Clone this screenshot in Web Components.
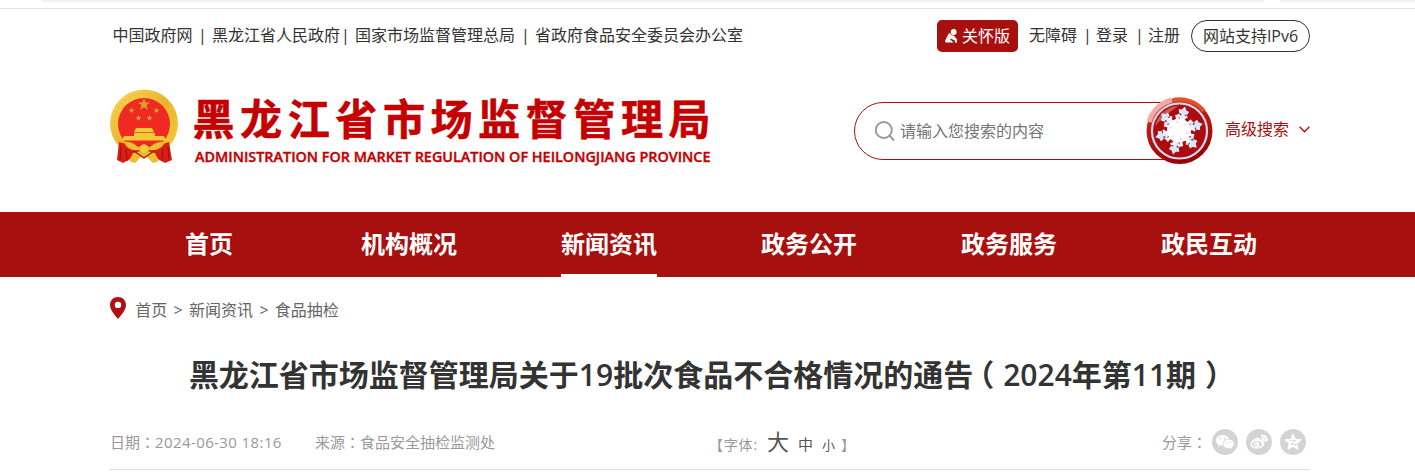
<!DOCTYPE html>
<html lang="zh-CN">
<head>
<meta charset="utf-8">
<title>黑龙江省市场监督管理局</title>
<style>
  body {
    background: #ffffff;
    color: #333333;
    font-family: 'Open Sans', 'Noto Sans CJK SC', sans-serif;
    font-size: 16px;
    font-weight: 400;
    margin: 0;
    overflow: hidden;
  }

  /* Full width marks sit in the middle of their cell */
  .colon {
    font-family: 'Noto Sans CJK TC', sans-serif;
  }

  .open,
  .close {
    font-feature-settings: 'halt';
  }

  .open {
    margin: 0 9px 0 6px;
  }

  .close {
    margin: 0 6px 0 9px;
  }
</style>
</head>
<body>
<hl-topbar>
  <hl-link slot="left" style="--before: 2.5px">中国政府网</hl-link>
  <hl-link slot="left" divided style="--left: 5.5px; --right: 6px">黑龙江省人民政府</hl-link>
  <hl-link slot="left" divided style="--left: 1px; --right: 6px">国家市场监督管理总局</hl-link>
  <hl-link slot="left" divided style="--left: 6px; --right: 6px">省政府食品安全委员会办公室</hl-link>
  <hl-care slot="right">关怀版</hl-care>
  <hl-link slot="right" style="--before: 11px">无障碍</hl-link>
  <hl-link slot="right" divided style="--left: 6px; --right: 5px">登录</hl-link>
  <hl-link slot="right" divided style="--left: 7px; --right: 5px">注册</hl-link>
  <hl-pill slot="right">网站支持IPv6</hl-pill>
</hl-topbar>
<hl-header>
  <hl-logo></hl-logo>
  <hl-search placeholder="请输入您搜索的内容">高级搜索</hl-search>
</hl-header>
<hl-nav>
  <hl-nav-item>首页</hl-nav-item>
  <hl-nav-item>机构概况</hl-nav-item>
  <hl-nav-item active>新闻资讯</hl-nav-item>
  <hl-nav-item>政务公开</hl-nav-item>
  <hl-nav-item>政务服务</hl-nav-item>
  <hl-nav-item>政民互动</hl-nav-item>
</hl-nav>
<hl-crumbs>
  <span>首页</span>
  <span>&gt;</span>
  <span>新闻资讯</span>
  <span>&gt;</span>
  <span>食品抽检</span>
</hl-crumbs>
<hl-article>
  <span slot="title">黑龙江省市场监督管理局关于19批次食品不合格情况的通告<span class="open">（</span>2024年第11期<span class="close">）</span></span>
  <span slot="date">日期<span class="colon" lang="zh-TW">：</span><span style="letter-spacing: .4px">2024-06-30 18:16</span></span>
  <span slot="source">来源<span class="colon" lang="zh-TW">：</span>食品安全抽检监测处</span>
  <hl-share slot="share">分享<span class="colon" lang="zh-TW">：</span></hl-share>
</hl-article>

<script>
  // Shared base
  // Clones the markup of each element into its root
  class HLElement extends HTMLElement {
    constructor() {
      super();

      const template = document.createElement( 'template' );
      template.innerHTML = this.constructor.markup;

      this.attachShadow( {mode: 'open'} );
      this.shadowRoot.appendChild( template.content.cloneNode( true ) );
    }
  }

  class HLTopbar extends HLElement {
    static markup = /* template */ `
      <style>
        :host {
          display: block;
          height: 64px;
        }

        .tabs {
          box-sizing: border-box;
          display: flex;
          gap: 16px;
          height: 9px;
          border-bottom: 1px solid #e6e6e6;
          padding-left: 42px;
        }

        .tabs i {
          background: #f1f1f1;
          height: 2px;
          width: 1222px;
        }

        .tabs i:last-child {
          flex-grow: 1;
          width: auto;
        }

        .row {
          display: flex;
          height: 32px;
          justify-content: space-between;
          margin: 11px 0 0 110px;
          width: 1200px;
        }

        .row div {
          align-items: center;
          display: flex;
        }
      </style>
      <div class="tabs"><i></i><i></i></div>
      <div class="row">
        <div><slot name="left"></slot></div>
        <div><slot name="right"></slot></div>
      </div>
    `;
  }

  class HLLink extends HLElement {
    static markup = /* template */ `
      <style>
        :host {
          display: inline-flex;
          height: 32px;
          line-height: 30px;
          margin-left: var( --before, 0 );
          white-space: nowrap;
        }

        b {
          font-weight: 400;
          margin: 0 var( --right, 6px ) 0 var( --left, 6px );
          text-align: center;
          width: 8px;
        }

        :host( :not( [divided] ) ) b {
          display: none;
        }
      </style>
      <b>|</b><slot></slot>
    `;
  }

  class HLCare extends HLElement {
    static markup = /* template */ `
      <style>
        :host {
          align-items: center;
          background: #a81010;
          border-radius: 5px;
          box-sizing: border-box;
          color: #ffffff;
          display: flex;
          height: 32px;
          line-height: 32px;
          padding-left: 8px;
          width: 81px;
        }

        svg {
          height: 14px;
          margin-right: 4px;
          width: 13px;
        }
      </style>
      <svg viewBox="0 0 13 14" fill="#ffffff">
        <circle cx="8.700" cy="3" r="2.900"></circle>
        <path d="M5 3.800C2.600 5 2 8.500 .2 11.600 0 13 .5 13.600 1.400 13.600H8.600L5.200 10.600 5.700 9.500 9.900 11.600V13.600H12V10.200L8.600 6.600C6.800 6.500 5.400 5.500 5 3.800Z"></path>
      </svg>
      <slot></slot>
    `;
  }

  class HLPill extends HLElement {
    static markup = /* template */ `
      <style>
        :host {
          border: 1px solid #333333;
          border-radius: 16px;
          box-sizing: border-box;
          height: 32px;
          line-height: 30px;
          margin-left: 11px;
          text-align: center;
          white-space: nowrap;
          width: 119px;
        }
      </style>
      <slot></slot>
    `;
  }

  class HLHeader extends HLElement {
    static markup = /* template */ `
      <style>
        :host {
          display: flex;
          height: 148px;
          justify-content: space-between;
          margin-left: 110px;
          width: 1200px;
        }
      </style>
      <slot></slot>
    `;
  }

  class HLLogo extends HLElement {
    static markup = /* template */ `
      <style>
        :host {
          display: block;
          padding-top: 5px;
        }

        svg {
          display: block;
          overflow: visible;
        }

        text {
          fill: #c40000;
          font-weight: 700;
        }

        .name {
          font-family: 'Noto Sans CJK SC', sans-serif;
          font-size: 42px;
          stroke: #c40000;
          stroke-width: .6px;
        }

        .english {
          font-family: 'Open Sans', sans-serif;
          font-size: 15px;
          font-weight: 600;
          stroke: #c40000;
          stroke-width: .4px;
        }
      </style>
      <svg width="630" height="120" viewBox="0 -20 630 120">
        <defs>
          <linearGradient id="gold" x1="0" y1="0" x2="1" y2="1">
            <stop offset="0" stop-color="#fbd95a"></stop>
            <stop offset=".5" stop-color="#eab52d"></stop>
            <stop offset="1" stop-color="#f8cf3e"></stop>
          </linearGradient>
          <path id="star" d="M0-6 1.500-1.900 5.800-1.800 2.300.8 3.600 5 0 2.500-3.600 5-2.300.8-5.800-1.800-1.500-1.900Z"></path>
        </defs>

        <!-- Emblem -->
        <circle cx="34" cy="34.500" r="34" fill="url(#gold)"></circle>
        <circle cx="34" cy="34.500" r="30" fill="none" stroke="#dca92a" stroke-width=".8" stroke-dasharray="2 3"></circle>
        <circle cx="34" cy="35" r="26" fill="#ee2a22"></circle>
        <g fill="#d9a230">
          <use href="#star" transform="translate(34 15.500) scale(1.080)"></use>
          <use href="#star" transform="translate(21.500 21.500) scale(.52)"></use>
          <use href="#star" transform="translate(46.500 21.500) scale(.52)"></use>
          <use href="#star" transform="translate(28.500 29) scale(.52)"></use>
          <use href="#star" transform="translate(39.500 29) scale(.52)"></use>
        </g>
        <path fill="#f7c838" d="M26 39H42L44 43H24ZM24 44H45V47H54L56 51.500H12L14 47H24Z"></path>
        <path stroke="#c88218" stroke-width=".8" d="M24 43.500H44"></path>
        <path fill="#d91e18" d="M9 53 24 57 34 55 46 57 59 53 62 71 55 74 44 68H24L13 74 7 71Z"></path>
        <path fill="#eebd32" d="M14 53C20 52 25 55 28 58L34 55 40 58C43 55 49 52 55 53 53 59 46 62 40 61L34 64 28 61C22 62 16 59 14 53ZM23 64 31 62H37L45 64 49 72 43 74 37 68H31L25 74 19 72Z"></path>
        <circle cx="34" cy="60" r="4.500" fill="#f5cc3d" stroke="#d6a02a" stroke-width=".8"></circle>
        <path fill="none" stroke="#a80f12" stroke-width="1.200" d="M11 57 10 71M16 60 17 72M58 57 59 71M53 60 52 72M24 62 34 69 44 62"></path>

        <text class="name" x="82.500" y="46" textLength="518" lengthAdjust="spacing">黑龙江省市场监督管理局</text>
        <text class="english" x="85" y="72.500" textLength="515.500" lengthAdjust="spacingAndGlyphs">ADMINISTRATION FOR MARKET REGULATION OF HEILONGJIANG PROVINCE</text>
      </svg>
    `;
  }

  class HLSearch extends HLElement {
    static markup = /* template */ `
      <style>
        :host {
          color: #a81010;
          display: flex;
          padding-top: 38px;
          width: 456px;
        }

        .box {
          align-items: center;
          border: 1px solid #a81010;
          border-radius: 29px;
          box-sizing: border-box;
          color: #757575;
          display: flex;
          height: 58px;
          padding-left: 20px;
          width: 354px;
        }

        .box span {
          line-height: 28px;
        }

        .glass {
          margin-right: 4px;
        }

        .snow {
          margin: -5px 0 0 -62px;
        }

        .more {
          align-items: center;
          display: flex;
          height: 54px;
          line-height: 28px;
          margin-left: 12px;
          white-space: nowrap;
        }

        .more svg {
          margin-left: 10px;
        }
      </style>
      <div class="box">
        <svg class="glass" width="21" height="21" viewBox="0 0 21 21" fill="none" stroke="#999999" stroke-width="1.900">
          <circle cx="8.800" cy="9" r="8"></circle>
          <path d="M14.500 14.500 19 19.500"></path>
        </svg>
        <span></span>
      </div>
      <svg class="snow" width="67" height="68" viewBox="0 0 67 68">
        <defs>
          <linearGradient id="rim" x1=".2" y1="0" x2=".5" y2="1">
            <stop offset="0" stop-color="#d9472f"></stop>
            <stop offset=".35" stop-color="#c21c14"></stop>
            <stop offset="1" stop-color="#990000"></stop>
          </linearGradient>
          <g id="arm">
            <path d="M0-8V-19" stroke-width="3.300"></path>
            <path d="M0-12-4.800-15.500M0-12 4.800-15.500" stroke-width="2.400"></path>
            <path d="M0-23.500-2-20.500-4.500-20-3.500-17.500H3.500L4.500-20 2-20.500Z" fill="#d2e7fb" stroke-width="1.300"></path>
          </g>
        </defs>
        <circle cx="33.500" cy="34" r="33" fill="url(#rim)"></circle>
        <path d="M3 25A31.500 31.500 0 0 1 26 3" fill="none" stroke="#f4aaa0" stroke-width="5"></path>
        <path d="M27 3A31.500 31.500 0 0 1 58 14" fill="none" stroke="#e4502b" stroke-width="4"></path>
        <circle cx="33.500" cy="34" r="27.500" fill="#ad0c0e" stroke="#cbd9f4" stroke-width="2.200"></circle>
        <path d="M9 29A25.500 25.500 0 0 1 32 9C25 14 17 20 9 29Z" fill="#e3847d" opacity=".65"></path>
        <g transform="translate(33 33.500) rotate(14)" stroke="#dcecfd">
          <use href="#arm"></use>
          <use href="#arm" transform="rotate(60)"></use>
          <use href="#arm" transform="rotate(120)"></use>
          <use href="#arm" transform="rotate(180)"></use>
          <use href="#arm" transform="rotate(240)"></use>
          <use href="#arm" transform="rotate(300)"></use>
          <circle r="12" fill="#ffffff" stroke="none"></circle>
          <circle r="13.500" fill="none" stroke="#f2f7ff" stroke-width="5" stroke-dasharray="3 4.069"></circle>
          <circle r="8.500" fill="none" stroke="#e6c5cd" stroke-width="2" stroke-dasharray="1 7.901"></circle>
        </g>
      </svg>
      <div class="more">
        <slot></slot>
        <svg width="11" height="7" viewBox="0 0 11 7" fill="none" stroke="#a81010" stroke-width="1.300"><path d="M.6.8 5.500 5.800 10.400.8"></path></svg>
      </div>
    `;

    connectedCallback() {
      this.shadowRoot.querySelector( 'span' ).textContent = this.getAttribute( 'placeholder' );
    }
  }

  class HLNav extends HLElement {
    static markup = /* template */ `
      <style>
        :host {
          background: #a81010;
          box-sizing: border-box;
          display: flex;
          height: 65px;
          padding-left: 109px;
        }
      </style>
      <slot></slot>
    `;
  }

  class HLNavItem extends HLElement {
    static markup = /* template */ `
      <style>
        :host {
          color: #ffffff;
          display: flex;
          font-size: 24px;
          font-weight: 700;
          justify-content: center;
          line-height: 64px;
          width: 200px;
        }

        span {
          box-sizing: border-box;
          height: 65px;
        }

        :host( [active] ) span {
          border-bottom: 3px solid #ffffff;
        }
      </style>
      <span><slot></slot></span>
    `;
  }

  class HLCrumbs extends HLElement {
    static markup = /* template */ `
      <style>
        :host {
          align-items: center;
          color: #666666;
          display: flex;
          gap: 6.3px;
          height: 66px;
          line-height: 66px;
          margin-left: 110px;
        }

        svg {
          margin: -4px 3px 0 0;
        }
      </style>
      <svg width="16" height="22" viewBox="0 0 16 22">
        <path fill="#b01010" fill-rule="evenodd" d="M8 0C3.500 0 0 3.500 0 8 0 13 5 18.500 8 22 11 18.500 16 13 16 8 16 3.500 12.500 0 8 0ZM8 4.700A3.200 3.200 0 1 1 8 11.100 3.200 3.200 0 1 1 8 4.700Z"></path>
      </svg>
      <slot></slot>
    `;
  }

  class HLArticle extends HLElement {
    static markup = /* template */ `
      <style>
        :host {
          display: block;
          margin-left: 110px;
          width: 1200px;
        }

        h1 {
          font-size: 30px;
          font-weight: 600;
          line-height: 64px;
          margin: 0;
          padding: 0 5px 2px 0;
          text-align: center;
          white-space: nowrap;
        }

        .meta {
          align-items: center;
          border-bottom: 1px solid #dddddd;
          box-sizing: border-box;
          color: #999999;
          display: grid;
          font-size: 15px;
          grid-template-columns: 205px 394px 1fr auto;
          height: 54px;
          line-height: 26px;
          margin-top: 7px;
          padding-bottom: 1px;
          white-space: nowrap;
        }

        .size {
          align-items: baseline;
          color: #555555;
          display: flex;
          padding-top: 2px;
        }

        .size i {
          color: #999999;
          font-size: 14px;
          font-style: normal;
        }
      </style>
      <h1><slot name="title"></slot></h1>
      <div class="meta">
        <slot name="date"></slot>
        <slot name="source"></slot>
        <div class="size">
          <i style="margin-right: 9px; letter-spacing: .8px">【字体:</i>
          <span style="font-size: 22px; margin-right: 9px">大</span>
          <span style="font-size: 15px; margin-right: 9px">中</span>
          <span style="font-size: 13px; margin-right: 6px">小</span>
          <i>】</i>
        </div>
        <slot name="share"></slot>
      </div>
    `;
  }

  class HLShare extends HLElement {
    static markup = /* template */ `
      <style>
        :host {
          align-items: center;
          display: flex;
          gap: 8px;
          height: 26px;
          padding-right: 4px;
        }

        span {
          margin-right: -3px;
        }
      </style>
      <span><slot></slot></span>
      <svg width="26" height="26" viewBox="0 0 26 26">
        <circle cx="13" cy="13" r="13" fill="#d4d4d4"></circle>
        <path fill="#ffffff" d="M10.500 6C6.800 6 4 8.300 4 11.200 4 13 5 14.500 6.500 15.400L6 17.400 8.300 16.200C9 16.400 10 16.500 10.700 16.400 10 12.500 13 9.700 16.900 9.800 16.200 7.600 13.600 6 10.500 6Z"></path>
        <path fill="#ffffff" d="M16.500 10.600C13.500 10.600 11.300 12.500 11.300 14.900S13.500 19.200 16.500 19.200C17.200 19.200 17.900 19.100 18.500 18.900L20.400 20 19.900 18.200C21.100 17.400 21.800 16.200 21.800 14.900 21.800 12.500 19.400 10.600 16.500 10.600Z"></path>
        <g fill="#d4d4d4"><circle cx="8.300" cy="9.600" r=".8"></circle><circle cx="12.700" cy="9.600" r=".8"></circle><circle cx="14.800" cy="13.500" r=".7"></circle><circle cx="18.200" cy="13.500" r=".7"></circle></g>
      </svg>
      <svg width="26" height="26" viewBox="0 0 26 26">
        <circle cx="13" cy="13" r="13" fill="#d4d4d4"></circle>
        <path fill="#ffffff" d="M10.800 9C12.300 8.300 13.500 8.900 13.200 10.600 15.500 9.700 17.200 10.300 16.600 12.300 18.100 12.800 18.700 13.800 18.300 15.200 17.600 17.800 14.600 19.600 11 19.600 7.200 19.600 4.500 17.900 4.500 15.400 4.500 13 7.700 10 10.800 9Z"></path>
        <ellipse cx="11" cy="15.300" rx="4.700" ry="3.300" fill="#d4d4d4"></ellipse>
        <circle cx="10.700" cy="15.500" r="2.700" fill="#ffffff"></circle>
        <circle cx="10" cy="16" r=".9" fill="#d4d4d4"></circle>
        <path fill="none" stroke="#ffffff" stroke-width="1.900" stroke-linecap="round" d="M15.500 6.700C19 5.900 21.600 8.800 20.500 12M16 9.300C17.800 8.900 18.700 10 18.100 11.400"></path>
      </svg>
      <svg width="26" height="26" viewBox="0 0 26 26">
        <circle cx="13" cy="13" r="13" fill="#d4d4d4"></circle>
        <path fill="#ffffff" stroke="#ffffff" stroke-width="1.600" stroke-linejoin="round" d="M13 5.500 15 10.500 20.500 10.900 16.300 14.400 17.700 19.700 13 16.800 8.300 19.700 9.700 14.400 5.500 10.900 11 10.500Z"></path>
        <path fill="none" stroke="#d4d4d4" stroke-width=".9" d="M10 11.500C12 11.100 14 11.100 15.700 11.600L11 15.200C13 15.700 15 15.700 17 15.200"></path>
      </svg>
    `;
  }

  window.customElements.define( 'hl-topbar', HLTopbar );
  window.customElements.define( 'hl-link', HLLink );
  window.customElements.define( 'hl-care', HLCare );
  window.customElements.define( 'hl-pill', HLPill );
  window.customElements.define( 'hl-header', HLHeader );
  window.customElements.define( 'hl-logo', HLLogo );
  window.customElements.define( 'hl-search', HLSearch );
  window.customElements.define( 'hl-nav', HLNav );
  window.customElements.define( 'hl-nav-item', HLNavItem );
  window.customElements.define( 'hl-crumbs', HLCrumbs );
  window.customElements.define( 'hl-article', HLArticle );
  window.customElements.define( 'hl-share', HLShare );
</script>
</body>
</html>
